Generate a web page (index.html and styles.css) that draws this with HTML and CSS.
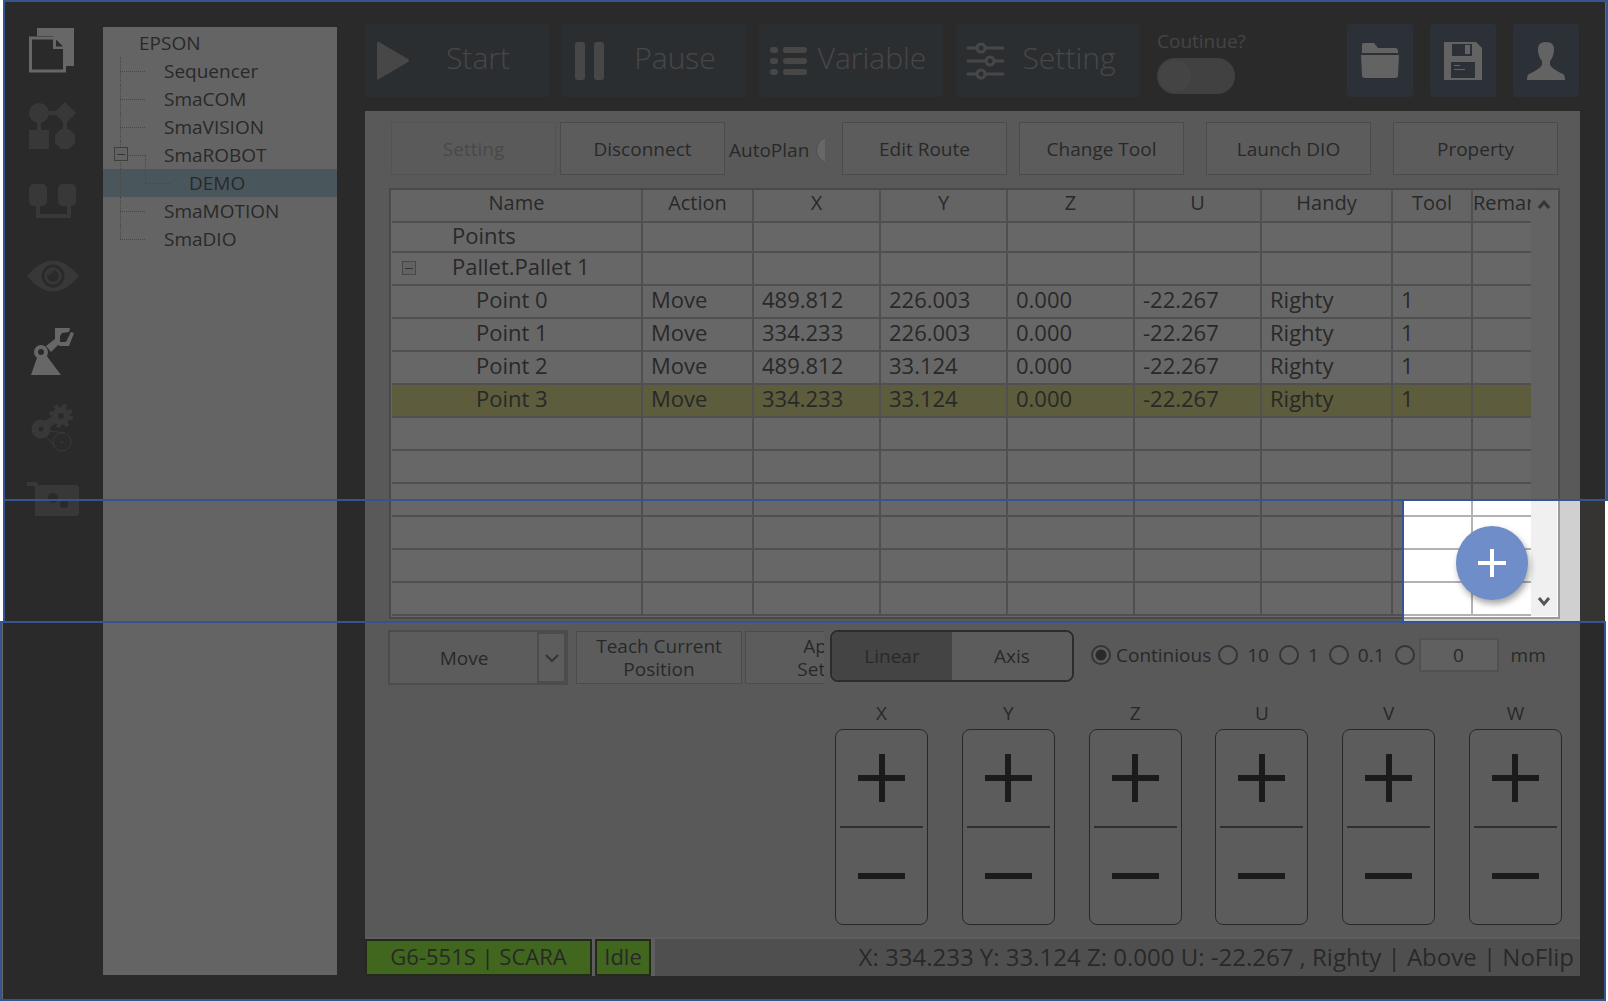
FILE: index.html
```html
<!DOCTYPE html>
<html lang="en">
<head>
<meta charset="utf-8">
<meta name="viewport" content="width=device-width, initial-scale=1">
<title>SmaROBOT - DEMO</title>
<link rel="stylesheet" href="styles.css">
</head>
<body>
<div class="app">
  <nav class="rail" aria-label="Modules">
    <button class="rail-btn on" aria-label="Documents"><svg width="52" height="52" viewBox="0 0 52 52"><path d="M10 3h37v38h-8V24L26 11H10z" fill="currentColor"/><path d="M3.500 13h24l10 10v23h-34z" fill="#363432" stroke="currentColor" stroke-width="3"/><path d="M26 12v12h12z" fill="currentColor"/><path d="M29 14.500v7h7z" fill="#363432"/></svg></button>
    <button class="rail-btn" aria-label="Sequencer"><svg width="52" height="52" viewBox="0 0 52 52" fill="currentColor"><circle cx="12" cy="13" r="10"/><path d="M38 2l11 11-11 11-11-11zM2 30h20v19H2zM20 11h10v4H20zM10 22h4v9h-4zM36 22h4v9h-4z"/><path d="M34 29h8l6 6v8l-6 6h-8l-6-6v-8z"/></svg></button>
    <button class="rail-btn" aria-label="Communication"><svg width="52" height="52" viewBox="0 0 52 52" fill="currentColor"><rect x="2" y="9" width="18" height="22" rx="5"/><rect x="31" y="9" width="18" height="22" rx="5"/><path d="M11 30v11h31V30" fill="none" stroke="currentColor" stroke-width="4"/></svg></button>
    <button class="rail-btn" aria-label="Vision"><svg width="52" height="52" viewBox="0 0 52 52"><path d="M0 26Q26-5 52 26Q26 57 0 26z" fill="currentColor"/><circle cx="26" cy="26" r="10" fill="none" stroke="#363432" stroke-width="3"/><circle cx="26" cy="26" r="6" fill="#363432"/><path d="M22 25q0-3 4-4" stroke="currentColor" stroke-width="2" fill="none"/></svg></button>
    <button class="rail-btn on" aria-label="Robot"><svg width="52" height="52" viewBox="0 0 52 52" fill="currentColor"><path d="M11 30h8l15 20H4z"/><circle cx="14" cy="27" r="5" fill="#363432" stroke="currentColor" stroke-width="4"/><path d="M19 21l9-7V3h15l-1 4-7 1-2 3v6h6l5-10 3 1-5 13h-9l-2-1-7 7z"/></svg></button>
    <button class="rail-btn" aria-label="Motion"><svg width="52" height="52" viewBox="0 0 52 52" fill="none" stroke="currentColor"><circle cx="14" cy="29" r="6" stroke-width="7"/><circle cx="34" cy="16" r="6" stroke-width="6"/><circle cx="34" cy="16" r="10" stroke-width="4" stroke-dasharray="4 4"/><path d="M19 25l9-6" stroke-width="8"/><circle cx="35" cy="42" r="9" stroke-width="1"/><circle cx="35" cy="42" r="1"/><path d="M19 37l9 9M22 31l16 2" /></svg></button>
    <button class="rail-btn" aria-label="Input and output"><svg width="52" height="52" viewBox="0 0 52 52" fill="currentColor"><path d="M0 7h9q2 0 2 3h38q3 0 3 3v25q0 3-3 3H8V11H0z"/><circle cx="26" cy="23" r="5" fill="#363432"/><circle cx="37" cy="29" r="4" fill="#363432"/></svg></button>
  </nav>

  <aside class="tree" aria-label="Project tree">
    <p class="node root">EPSON</p>
    <ul class="branch">
      <li><span class="node">Sequencer</span></li>
      <li><span class="node">SmaCOM</span></li>
      <li><span class="node">SmaVISION</span></li>
      <li class="open"><button class="fold" aria-label="Collapse SmaROBOT"></button><span class="node">SmaROBOT</span>
        <ul class="leafs"><li class="node selected">DEMO</li></ul>
      </li>
      <li><span class="node">SmaMOTION</span></li>
      <li class="last"><span class="node">SmaDIO</span></li>
    </ul>
  </aside>

  <main class="work">
    <header class="topbar">
      <button class="big"><svg width="40" height="40" viewBox="0 0 40 40" fill="currentColor"><path d="M4 1q-2-1-2 2v34q0 3 2 1l29-17q2-1 0-3z"/></svg><span>Start</span></button>
      <button class="big"><svg width="40" height="40" viewBox="0 0 40 40" fill="currentColor"><rect x="3" y="1" width="10" height="38" rx="3"/><rect x="22" y="1" width="10" height="38" rx="3"/></svg><span>Pause</span></button>
      <button class="big"><svg width="40" height="40" viewBox="0 0 40 40" fill="currentColor"><rect x="1" y="6" width="8" height="6" rx="3"/><rect x="14" y="6" width="24" height="6" rx="3"/><rect x="1" y="17" width="8" height="6" rx="3"/><rect x="14" y="17" width="24" height="6" rx="3"/><rect x="1" y="28" width="8" height="6" rx="3"/><rect x="14" y="28" width="24" height="6" rx="3"/></svg><span>Variable</span></button>
      <button class="big"><svg width="40" height="40" viewBox="0 0 40 40" fill="none" stroke="currentColor" stroke-width="3" stroke-linecap="round"><path d="M2 7h9M20 7h17M2 20h18M29 20h8M2 33h9M20 33h17"/><circle cx="15" cy="7" r="4"/><circle cx="24" cy="20" r="4"/><circle cx="15" cy="33" r="4"/></svg><span>Setting</span></button>
      <label class="cont">Coutinue?<input type="checkbox" class="switch"></label>
      <div class="tools">
        <button class="sq" aria-label="Open"><svg width="40" height="40" viewBox="0 0 40 40" fill="currentColor"><path d="M2 4q0-2 2-2h10l4 5h17q3 0 3 3v2H2zM1 14h38l-1 20q0 3-3 3H5q-3 0-3-3z"/></svg></button>
        <button class="sq" aria-label="Save"><svg width="40" height="40" viewBox="0 0 40 40"><path d="M1 1h32l6 6v32H1z" fill="currentColor"/><path d="M9 3h20v12H9zM8 21h24v16H8z" fill="#3a4c62"/><path d="M22 4h5v9h-5zM11 24h6v1h-6zM11 28h11v1H11z" fill="currentColor"/></svg></button>
        <button class="sq" aria-label="User"><svg width="40" height="40" viewBox="0 0 40 40" fill="currentColor"><path d="M20 1q9 0 8 9-1 7-4 10v4q2 4 13 9 2 1 2 6H1q0-5 2-6 11-5 13-9v-4q-3-3-4-10-1-9 8-9z"/></svg></button>
      </div>
    </header>

    <section class="panel">
      <div class="actions">
        <button class="flat" disabled>Setting</button>
        <button class="flat">Disconnect</button>
        <label class="auto">AutoPlan<span class="clip"><input type="checkbox" class="pill"></span></label>
        <button class="flat">Edit Route</button>
        <button class="flat change">Change Tool</button>
        <button class="flat wide-gap">Launch DIO</button>
        <button class="flat wide-gap">Property</button>
      </div>

      <div class="grid-box">
        <table class="points">
          <colgroup><col><col class="c-action"><col class="c-num"><col class="c-num"><col class="c-num"><col class="c-num"><col class="c-handy"><col class="c-tool"><col class="c-remark"></colgroup>
          <thead><tr><th>Name</th><th>Action</th><th>X</th><th>Y</th><th>Z</th><th>U</th><th>Handy</th><th>Tool</th><th class="cut">Remar</th></tr></thead>
          <tbody>
            <tr class="short"><td class="l1">Points</td><td></td><td></td><td></td><td></td><td></td><td></td><td></td><td></td></tr>
            <tr><td class="l1 foldable"><button class="fold" aria-label="Collapse Pallet 1"></button>Pallet.Pallet 1</td><td></td><td></td><td></td><td></td><td></td><td></td><td></td><td></td></tr>
            <tr><td class="l2">Point 0</td><td>Move</td><td>489.812</td><td>226.003</td><td>0.000</td><td>-22.267</td><td>Righty</td><td>1</td><td></td></tr>
            <tr><td class="l2">Point 1</td><td>Move</td><td>334.233</td><td>226.003</td><td>0.000</td><td>-22.267</td><td>Righty</td><td>1</td><td></td></tr>
            <tr><td class="l2">Point 2</td><td>Move</td><td>489.812</td><td>33.124</td><td>0.000</td><td>-22.267</td><td>Righty</td><td>1</td><td></td></tr>
            <tr class="current"><td class="l2">Point 3</td><td>Move</td><td>334.233</td><td>33.124</td><td>0.000</td><td>-22.267</td><td>Righty</td><td>1</td><td></td></tr>
            <tr><td></td><td></td><td></td><td></td><td></td><td></td><td></td><td></td><td></td></tr>
            <tr><td></td><td></td><td></td><td></td><td></td><td></td><td></td><td></td><td></td></tr>
            <tr><td></td><td></td><td></td><td></td><td></td><td></td><td></td><td></td><td></td></tr>
            <tr><td></td><td></td><td></td><td></td><td></td><td></td><td></td><td></td><td></td></tr>
            <tr><td></td><td></td><td></td><td></td><td></td><td></td><td></td><td></td><td></td></tr>
            <tr><td></td><td></td><td></td><td></td><td></td><td></td><td></td><td></td><td></td></tr>
          </tbody>
        </table>
        <div class="scroll">
          <button aria-label="Scroll up"><svg width="14" height="12" viewBox="0 0 14 12"><path d="M2 9l5-6 5 6" fill="none" stroke="#555" stroke-width="3"/></svg></button>
          <button aria-label="Scroll down"><svg width="14" height="12" viewBox="0 0 14 12"><path d="M2 3l5 6 5-6" fill="none" stroke="#555" stroke-width="3"/></svg></button>
        </div>
        <button class="fab" aria-label="Add point"><svg width="30" height="30" viewBox="0 0 30 30"><path d="M15 1v28M1 15h28" stroke="#fff" stroke-width="4"/></svg></button>
      </div>

      <div class="jog-area">
        <div class="teach">
          <div class="combo"><select aria-label="Motion command"><option>Move</option></select><span class="arrow"><svg width="14" height="10" viewBox="0 0 14 10"><path d="M1 2l6 6 6-6" fill="none" stroke="#555" stroke-width="2"/></svg></span></div>
          <button class="flat two">Teach Current Position</button>
          <div class="apply-clip"><button class="flat two">Apply<br>Setting</button></div>
        </div>
        <div class="jog">
          <div class="jog-top">
            <div class="seg"><button class="active">Linear</button><button>Axis</button></div>
            <div class="steps">
              <label><input type="radio" name="step" checked>Continious</label>
              <label><input type="radio" name="step">10</label>
              <label><input type="radio" name="step">1</label>
              <label><input type="radio" name="step">0.1</label>
              <input type="radio" name="step" aria-label="Custom step">
              <input class="num" type="text" value="0" aria-label="Step in mm">
            </div>
            <span class="unit">mm</span>
          </div>
          <div class="axes">
            <div class="axis"><span>X</span><div class="pad"><button class="plus" aria-label="X plus"></button><button class="minus" aria-label="X minus"></button></div></div>
            <div class="axis"><span>Y</span><div class="pad"><button class="plus" aria-label="Y plus"></button><button class="minus" aria-label="Y minus"></button></div></div>
            <div class="axis"><span>Z</span><div class="pad"><button class="plus" aria-label="Z plus"></button><button class="minus" aria-label="Z minus"></button></div></div>
            <div class="axis"><span>U</span><div class="pad"><button class="plus" aria-label="U plus"></button><button class="minus" aria-label="U minus"></button></div></div>
            <div class="axis"><span>V</span><div class="pad"><button class="plus" aria-label="V plus"></button><button class="minus" aria-label="V minus"></button></div></div>
            <div class="axis"><span>W</span><div class="pad"><button class="plus" aria-label="W plus"></button><button class="minus" aria-label="W minus"></button></div></div>
          </div>
        </div>
      </div>

      <footer class="status">
        <span class="ok model">G6-551S | SCARA</span>
        <span class="ok idle">Idle</span>
        <span class="pos">X: 334.233 Y: 33.124 Z: 0.000 U: -22.267 , Righty | Above | NoFlip</span>
      </footer>
    </section>
  </main>
</div>

<div class="spotlight" aria-hidden="true">
  <div class="shade top"></div>
  <div class="shade side"></div>
  <div class="shade bottom"></div>
</div>
</body>
</html>
```
FILE: styles.css
```css
* { box-sizing: border-box; }

body {
  margin: 0;
  position: relative;
  background: #fff;
  color: #2e2e2e;
  font: 19px/28px "Open Sans", "Noto Sans", sans-serif;
}

button, input, select { font: inherit; color: inherit; margin: 0; }
button { padding: 0; border: 0; background: none; }
svg { display: block; flex: none; }
ul { list-style: none; margin: 0; padding: 0; }

.app {
  display: flex;
  min-height: 100vh;
  margin: 0 3px;
  padding: 24px 25px 26px 24px;
  background: #363432;
}

/* module rail */
.rail { display: flex; flex-direction: column; gap: 23px; width: 76px; padding-top: 1px; }
.rail-btn { width: 52px; height: 52px; color: #626262; }
.rail-btn.on { color: #fff; }

/* project tree */
.tree {
  flex: none;
  width: 234px;
  margin: 3px 28px 1px 0;
  padding-top: 2px;
  background: #f4f4f4;
}
.node { display: block; }
.root { margin: 0; padding-left: 36px; }
.branch { position: relative; }
.branch > li { position: relative; }
.branch > li > .node { padding-left: 61px; }
.branch > li::before {
  content: "";
  position: absolute;
  left: 17px; top: 0;
  width: 25px; height: 14px;
  border-bottom: 1px dotted #999;
}
.branch > li::after {
  content: "";
  position: absolute;
  left: 17px; top: 0; bottom: 0;
  border-left: 1px dotted #999;
}
.branch > .last::after { bottom: 14px; }
.leafs { position: relative; }
.leafs::before {
  content: "";
  position: absolute;
  left: 42px; top: -14px;
  width: 25px; height: 28px;
  border-left: 1px dotted #999;
  border-bottom: 1px dotted #999;
}
.leafs .node { padding-left: 86px; }
.selected { background: #9cc8dc; }

.fold {
  position: absolute;
  z-index: 1;
  width: 14px; height: 14px;
  border: 1px solid #777;
  background: linear-gradient(#555, #555) center / 8px 1px no-repeat #eee;
}
.tree .fold { left: 11px; top: 6px; }

/* top bar */
.work { flex: 1; min-width: 0; display: flex; flex-direction: column; gap: 14px; }
.topbar { display: flex; gap: 13px; height: 73px; }
.big {
  display: flex;
  align-items: center;
  flex: 0 1 184px;
  padding: 0 8px 6px 10px;
  border-radius: 4px;
  background: #38404a;
  color: #949494;
  font-size: 30px;
  font-weight: 300;
}
.big svg { margin-top: 6px; }
.big span { flex: 1; text-align: center; }
.cont { margin-left: 4px; color: #8a8a8a; line-height: 34px; }
.switch {
  appearance: none;
  display: block;
  width: 78px; height: 36px;
  border-radius: 18px;
  background: radial-gradient(circle at 18px 18px, #8a8a8a 16px, #777 17px, #808080 18px);
}
.tools { display: flex; gap: 17px; margin-left: auto; padding-right: 1px; }
.sq {
  display: grid;
  place-items: center;
  width: 66px;
  border-radius: 4px;
  background: #3a4c62;
  color: #f0f0f0;
}

/* work panel */
.panel {
  flex: 1;
  display: flex;
  flex-direction: column;
  background: #d0d0d0;
}
.actions { display: flex; margin: 11px 21px 13px 26px; }
.flat {
  flex: 0 1 165px;
  height: 53px;
  border: 1px solid #a0a0a0;
  background: #dadada;
}
.flat:disabled { border-color: #bcbcbc; background: #d2d2d2; color: #999; margin-right: 4px; }
.auto { display: flex; align-items: center; width: 117px; padding: 2px 0 0 4px; }
.auto .clip { width: 9px; height: 28px; margin-left: 7px; overflow: hidden; }
.pill {
  appearance: none;
  display: block;
  width: 56px; height: 28px;
  border: 1px solid #aaa;
  border-radius: 14px;
  background: #fff;
}
.change { margin-left: 12px; }
.wide-gap { margin-left: 22px; }

.grid-box {
  position: relative;
  display: flex;
  margin: 0 20px 0 24px;
  padding: 0 1px 1px;
  border: 2px solid #9a9a9a;
  background: #fff;
}
.points { flex: 1; width: 100%; table-layout: fixed; border-collapse: collapse; font-size: 22px; }
.points th, .points td {
  height: 33px;
  padding: 0 0 6px 8px;
  border-right: 2px solid #b2b2b2;
  border-bottom: 2px solid #b2b2b2;
  line-height: 24px;
  white-space: nowrap;
  overflow: hidden;
}
.points th:last-child, .points td:last-child { border-right: 0; }
.points th { height: 32px; padding: 0 0 6px; font-size: 20px; font-weight: 400; background: #f6f6f6; }
.points .cut { text-align: left; }
.points .short td { height: 30px; padding-bottom: 4px; }
.points td.l1 { padding-left: 60px; }
.points td.l2 { padding-left: 84px; }
.foldable { position: relative; }
.points .fold { left: 10px; top: 8px; border-color: #999; }
.current { background: #dcda6e; }
.c-action { width: 111px; }
.c-num { width: 127px; }
.c-handy { width: 131px; }
.c-tool { width: 80px; }
.c-remark { width: 59px; }
.scroll {
  display: flex;
  flex-direction: column;
  justify-content: space-between;
  width: 26px;
  background: #f0f0f0;
}
.scroll button { display: grid; place-items: center; height: 30px; }
.fab {
  position: absolute;
  right: 30px; bottom: 17px;
  display: grid;
  place-items: center;
  width: 72px; height: 74px;
  border-radius: 50%;
  background: #6f8dc9;
  box-shadow: 2px 4px 6px rgba(0, 0, 0, .35);
}

/* teaching and jogging */
.jog-area { display: flex; flex: 1; margin: 11px 18px 12px 23px; }
.teach { display: flex; flex: 1; min-width: 0; align-items: flex-start; }
.combo {
  position: relative;
  flex: none;
  width: 180px; height: 55px;
  margin-right: 8px;
  border: 2px solid #a4a4a4;
}
.combo select {
  appearance: none;
  width: 100%; height: 100%;
  padding: 0 28px 0 0;
  border: 0;
  border-radius: 0;
  background: #dadada;
  text-align-last: center;
}
.arrow {
  position: absolute;
  right: 0; top: 0; bottom: 0;
  display: grid;
  place-items: center;
  width: 29px;
  border: 2px solid #a4a4a4;
  background: #dcdcdc;
  pointer-events: none;
}
.two { flex: none; width: 166px; margin: 1px 3px 0 0; padding: 0 18px; line-height: 23px; }
.apply-clip { width: 79px; overflow: hidden; }
.jog { flex: none; width: 732px; }
.jog-top { display: flex; align-items: flex-start; }
.seg {
  display: flex;
  width: 244px; height: 52px;
  border: 2px solid #3a3a3a;
  border-radius: 8px;
  overflow: hidden;
}
.seg button { flex: 1; background: #dadade; }
.seg .active { background: #8a8a8a; }
.steps { display: flex; align-items: center; height: 50px; margin-left: 17px; }
.steps label { display: flex; align-items: center; gap: 5px; margin-right: 7px; }
.steps label + label { gap: 9px; margin-right: 10px; }
.steps input[type="radio"] {
  appearance: none;
  width: 20px; height: 20px;
  border: 2px solid #555;
  border-radius: 50%;
  background: #dcdcdc;
}
.steps input[type="radio"]:checked { background: radial-gradient(circle, #333 5px, #dcdcdc 6px); }
.steps .num {
  width: 80px; height: 34px;
  margin-left: 4px;
  padding: 0;
  border: 2px solid #b4b4b4;
  background: #e8e8e8;
  text-align: center;
}
.unit { margin: 11px 0 0 12px; }
.axes { display: flex; justify-content: space-between; margin: 17px 0 0 5px; }
.axis { width: 93px; text-align: center; }
.pad {
  display: flex;
  flex-direction: column;
  height: 196px;
  margin-top: 2px;
  padding: 0 4px;
  border: 1px solid #2e2e2e;
  border-radius: 8px;
  background: #dadade;
}
.pad button { flex: 1; background-position: center; background-repeat: no-repeat; }
.plus {
  border-bottom: 2px solid #444;
  background-image: linear-gradient(#000, #000), linear-gradient(#000, #000);
  background-size: 47px 6px, 6px 48px;
}
.minus { background-image: linear-gradient(#000, #000); background-size: 47px 6px; }

/* status bar */
.status {
  display: flex;
  height: 39px;
  border-top: 2px solid #e0e0e0;
  background: #e0e0e0;
}
.ok {
  border: 2px solid #1c3000;
  background: #80fa0c;
  font-size: 22px;
  line-height: 30px;
  text-align: center;
}
.model { width: 227px; margin-right: 3px; }
.idle { width: 56px; margin-right: 4px; }
.pos {
  flex: 1;
  padding-right: 6px;
  background: #b0b0b0;
  font-size: 24px;
  line-height: 36px;
  text-align: right;
  white-space: nowrap;
}

/* shading that leaves the add button lit */
.spotlight {
  position: absolute;
  z-index: 5;
  inset: 0;
  display: grid;
  grid-template-rows: 501px 120px 1fr;
  pointer-events: none;
}
.shade { background: rgba(38, 38, 38, .7); border: 2px solid #34558f; }
.top { margin-left: 3px; }
.side { margin: 0 204px 0 3px; border-width: 0 2px; }
.bottom { margin: 0 2px 1px 0; }
```
